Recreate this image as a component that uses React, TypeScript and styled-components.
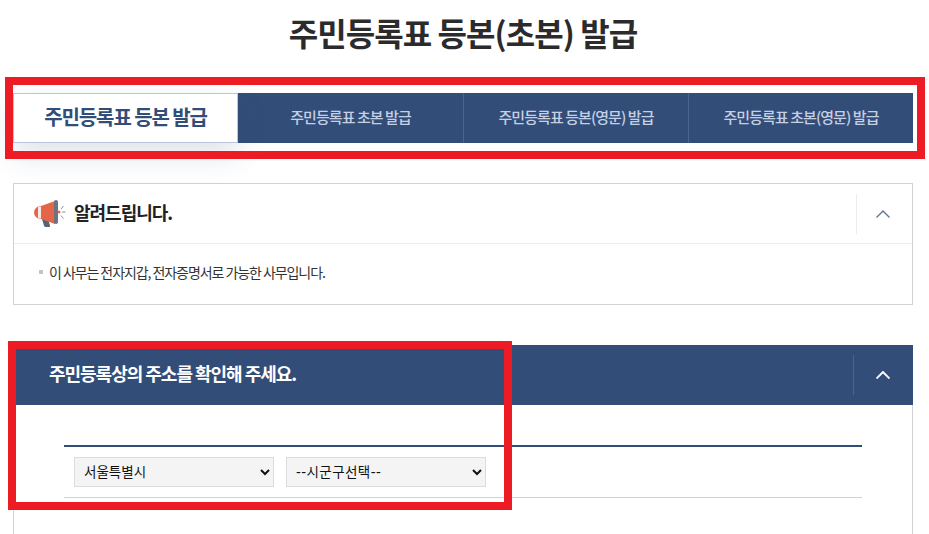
import React from "react";
import styled, { createGlobalStyle } from "styled-components";

const Global = createGlobalStyle`
  html, body { margin: 0; padding: 0; background: #fff; overflow: hidden; }
  body { font-family: "Noto Sans CJK KR", "Noto Sans", sans-serif; color: #222; }
`;
const Page = styled.div`
  position: relative;
  width: 929px;
  height: 534px;
  overflow: hidden;
  padding: 0 16px 0 13px;
  box-sizing: border-box;
`;
const Title = styled.h1`
  margin: 0;
  height: 93px;
  padding-top: 9px;
  box-sizing: border-box;
  font-size: 32px;
  line-height: 46px;
  font-weight: 700;
  letter-spacing: -0.95px;
  text-align: center;
  color: #2b2b2b;
`;
const Tabs = styled.div`
  display: grid;
  grid-template-columns: repeat(4, 225px);
  height: 50px;
  background: #334d79;
`;
const Tab = styled.div<{ $active?: boolean }>`
  display: flex;
  align-items: center;
  justify-content: center;
  box-sizing: border-box;
  padding-bottom: 4px;
  ${(p) =>
    p.$active
      ? `background:#fff;border:1px solid #b8c5da;color:#334d79;font-size:20px;font-weight:700;letter-spacing:-1.1px;box-shadow:0 12px 30px rgba(51,77,121,.16);`
      : `color:#c5d0e2;font-size:15px;font-weight:500;letter-spacing:-0.95px;border-left:1px solid #4a6390;`}
  &:nth-child(2) { border-left: none; }
`;
const Notice = styled.section`
  margin-top: 40px;
  height: 122px;
  border: 1px solid #d2d2d2;
  box-sizing: border-box;
`;
const NoticeHead = styled.div`
  display: flex;
  align-items: center;
  height: 59px;
  padding-left: 20px;
  border-bottom: 1px solid #ececec;
`;
const NoticeTitle = styled.h2`
  flex: 1;
  margin: 0 0 3px 8px;
  font-size: 18px;
  font-weight: 700;
  letter-spacing: -1px;
  color: #222;
`;
const Toggle = styled.div<{ $dark?: boolean }>`
  display: flex;
  align-items: center;
  justify-content: center;
  box-sizing: border-box;
  width: ${(p) => (p.$dark ? "60px" : "56px")};
  height: 40px;
  padding-right: ${(p) => (p.$dark ? "1px" : "4px")};
  border-left: 1px solid ${(p) => (p.$dark ? "#4a6390" : "#ececec")};
  color: ${(p) => (p.$dark ? "#fff" : "#5f7690")};
  stroke-width: ${(p) => (p.$dark ? "1.9" : "1.4")};
`;
const NoticeBody = styled.div`
  display: flex;
  align-items: center;
  height: 56px;
  padding-left: 25px;
  font-size: 14px;
  letter-spacing: -1.07px;
  color: #333;
`;
const Bullet = styled.span`
  width: 4px;
  height: 4px;
  margin-right: 6px;
  background: #c4c4c4;
`;
const Panel = styled.section`
  margin-top: 40px;
  height: 300px;
  border: solid #d2d2d2;
  border-width: 0 1px;
`;
const PanelHead = styled.div`
  display: flex;
  align-items: center;
  height: 60px;
  margin: 0 -1px;
  padding-left: 36px;
  background: #334d79;
`;
const PanelTitle = styled.h2`
  flex: 1;
  margin: 0 0 4px;
  font-size: 18px;
  font-weight: 700;
  letter-spacing: -1.02px;
  color: #fff;
`;
const Form = styled.div`
  display: flex;
  gap: 12px;
  margin: 40px 50px 0;
  height: 53px;
  padding: 10px 10px 0;
  box-sizing: border-box;
  border-top: 2px solid #334d79;
  border-bottom: 1px solid #d2d2d2;
`;
const Select = styled.select<{ $spacing?: string }>`
  width: 200px;
  height: 30px;
  padding: 0 5px;
  box-sizing: border-box;
  background: #f4f4f4;
  border: 1px solid #dcdcdc;
  border-radius: 0;
  font-family: "DejaVu Sans", "Noto Sans CJK KR", sans-serif;
  font-size: 13.5px;
  letter-spacing: ${(p) => p.$spacing || "0"};
  color: #111;
`;
const Mark = styled.div`
  position: absolute;
  box-sizing: border-box;
  border: 8px solid #ed1c24;
  pointer-events: none;
`;
const TabMark = styled(Mark)`
  left: 5px;
  top: 77px;
  width: 920px;
  height: 82px;
`;
const FormMark = styled(Mark)`
  left: 8px;
  top: 341px;
  width: 504px;
  height: 169px;
`;

const Chevron = () => (
  <svg width="14" height="8" viewBox="0 0 14 8" fill="none" stroke="currentColor">
    <path d="M.5 7.5 7 1l6.5 6.5" />
  </svg>
);

const Megaphone = () => (
  <svg width="32" height="28" viewBox="0 0 32 28" fill="none">
    <path d="M8 19h6l2 6.5c.3 1-.4 1.5-1.3 1.5h-3c-.8 0-1.4-.4-1.7-1.2z" fill="#566573" />
    <path d="M6.500 6H8v13H6.500a6.500 6.500 0 0 1 0-13z" fill="#e56548" />
    <path d="M4 6.500h3v12H4z" fill="#f2ece8" />
    <path d="M7 6 21 1v23L7 19z" fill="#e56548" />
    <rect x="20" y="0" width="4" height="24" rx="2" fill="#6b7580" />
    <circle cx="25" cy="12" r="1.500" fill="#e56548" />
    <path d="M27 9l2.500-3M27 15.500l2.500 3M28 12h3.500" stroke="#8b949c" strokeWidth="1" />
  </svg>
);

export default function App() {
  return (
    <Page>
      <Global />
      <Title>주민등록표 등본(초본) 발급</Title>
      <Tabs>
        <Tab $active>주민등록표 등본 발급</Tab>
        <Tab>주민등록표 초본 발급</Tab>
        <Tab>주민등록표 등본(영문) 발급</Tab>
        <Tab>주민등록표 초본(영문) 발급</Tab>
      </Tabs>
      <Notice>
        <NoticeHead>
          <Megaphone />
          <NoticeTitle>알려드립니다.</NoticeTitle>
          <Toggle>
            <Chevron />
          </Toggle>
        </NoticeHead>
        <NoticeBody>
          <Bullet />이 사무는 전자지갑, 전자증명서로 가능한 사무입니다.
        </NoticeBody>
      </Notice>
      <Panel>
        <PanelHead>
          <PanelTitle>주민등록상의 주소를 확인해 주세요.</PanelTitle>
          <Toggle $dark>
            <Chevron />
          </Toggle>
        </PanelHead>
        <Form>
          <Select defaultValue="서울특별시">
            <option>서울특별시</option>
          </Select>
          <Select defaultValue="--시군구선택--" $spacing="0.4px">
            <option>--시군구선택--</option>
          </Select>
        </Form>
      </Panel>
      <TabMark />
      <FormMark />
    </Page>
  );
}
